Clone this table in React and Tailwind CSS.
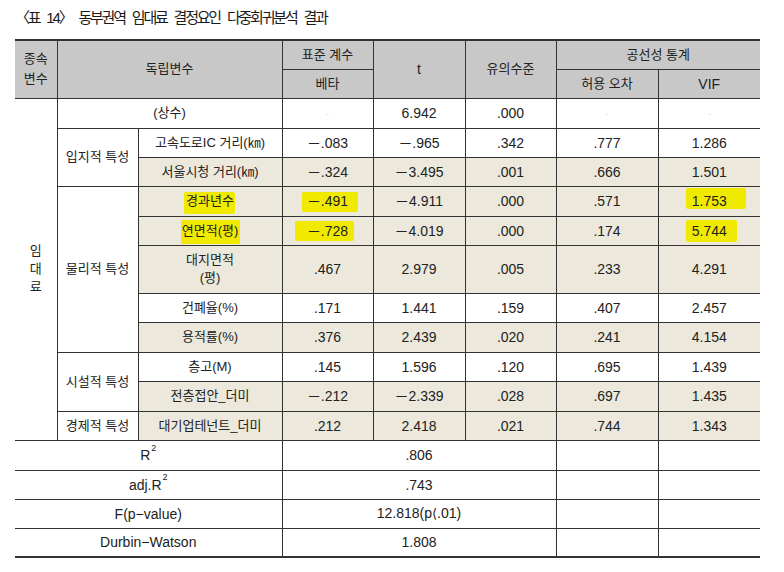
import React from "react";

const C = "border border-[#333] text-center align-middle p-0";
const BG = "bg-[#ece9dc]";
const HD = "bg-[#c8c8c8]";
const N = "text-[14px]";

function HL({ children, box }) {
  return (
    <span className="relative inline-block leading-[16px]">
      <span className={"absolute rounded-[2px] bg-[#f0ea00] " + box} />
      <span className="relative">{children}</span>
    </span>
  );
}

const Faint = () => <span className="text-[#d0d0d0] text-[8px]">-</span>;

function Nums({ beta, t, sig, tol, vif, bg }) {
  const b = bg ? BG : "";
  return (
    <>
      <td className={`${C} ${N} ${b}`}>{beta}</td>
      <td className={`${C} ${N} ${b}`}>{t}</td>
      <td className={`${C} ${N} ${b}`}>{sig}</td>
      <td className={`${C} ${N} ${b}`}>{tol}</td>
      <td className={`${C} ${N} ${b} border-r-0`}>{vif}</td>
    </>
  );
}

const Sup = () => <sup className="text-[9px] align-[5px] ml-[1px]">2</sup>;

export default function App() {
  return (
    <div className="w-[784px] h-[572px] bg-white pl-[15px] pt-[8px] text-[#222] font-['Liberation_Sans','Noto_Sans_CJK_KR',sans-serif]">
      <div className="h-[20px] text-[15px] leading-[20px] tracking-[-2.2px] [word-spacing:5px] text-[#1a1a1a]">
        〈표 14〉 동부권역 임대료 결정요인 다중회귀분석 결과
      </div>
      <table className="mt-[11px] w-[745px] table-fixed border-collapse text-[13px] leading-[16px]">
        <colgroup>
          <col className="w-[42px]" />
          <col className="w-[81px]" />
          <col className="w-[144px]" />
          <col className="w-[91px]" />
          <col className="w-[92px]" />
          <col className="w-[91px]" />
          <col className="w-[102px]" />
          <col className="w-[102px]" />
        </colgroup>
        <tbody>
          <tr className="h-[29px]">
            <td rowSpan={2} className={`${C} ${HD} border-l-0 border-t-2 leading-[20px]`}>
              종속
              <br />
              변수
            </td>
            <td rowSpan={2} colSpan={2} className={`${C} ${HD} border-t-2`}>독립변수</td>
            <td className={`${C} ${HD} border-t-2`}>표준 계수</td>
            <td rowSpan={2} className={`${C} ${HD} ${N} border-t-2`}>t</td>
            <td rowSpan={2} className={`${C} ${HD} border-t-2`}>유의수준</td>
            <td colSpan={2} className={`${C} ${HD} border-t-2 border-r-0`}>공선성 통계</td>
          </tr>
          <tr className="h-[29px]">
            <td className={`${C} ${HD}`}>베타</td>
            <td className={`${C} ${HD}`}>허용 오차</td>
            <td className={`${C} ${HD} ${N} border-r-0`}>VIF</td>
          </tr>
          <tr className="h-[30px]">
            <td rowSpan={11} className={`${C} border-l-0 leading-[18px]`}>
              임
              <br />
              대
              <br />
              료
            </td>
            <td colSpan={2} className={C}>(상수)</td>
            <td className={C}><Faint /></td>
            <td className={`${C} ${N}`}>6.942</td>
            <td className={`${C} ${N}`}>.000</td>
            <td className={C}><Faint /></td>
            <td className={`${C} border-r-0`}><Faint /></td>
          </tr>
          <tr className="h-[29px]">
            <td rowSpan={2} className={C}>입지적 특성</td>
            <td className={C}>고속도로IC 거리(㎞)</td>
            <Nums beta="－.083" t="－.965" sig=".342" tol=".777" vif="1.286" />
          </tr>
          <tr className="h-[29px]">
            <td className={`${C} ${BG}`}>서울시청 거리(㎞)</td>
            <Nums beta="－.324" t="－3.495" sig=".001" tol=".666" vif="1.501" bg />
          </tr>
          <tr className="h-[30px]">
            <td rowSpan={5} className={C}>물리적 특성</td>
            <td className={`${C} ${BG}`}>
              <HL box="-left-[2px] -right-[1px] -top-[1px] -bottom-[5px]">경과년수</HL>
            </td>
            <td className={`${C} ${N} ${BG}`}>
              <HL box="-left-[5px] -right-[10px] -top-[1px] -bottom-[3px]">－.491</HL>
            </td>
            <td className={`${C} ${N} ${BG}`}>－4.911</td>
            <td className={`${C} ${N} ${BG}`}>.000</td>
            <td className={`${C} ${N} ${BG}`}>.571</td>
            <td className={`${C} ${N} ${BG} border-r-0`}>
              <HL box="-left-[6px] -right-[19px] -top-[5px] bottom-0">1.753</HL>
            </td>
          </tr>
          <tr className="h-[29px]">
            <td className={`${C} ${BG}`}>
              <HL box="-left-[1px] -right-[2px] -top-[3px] -bottom-[5px]">연면적(평)</HL>
            </td>
            <td className={`${C} ${N} ${BG}`}>
              <HL box="-left-[12px] -right-[6px] -top-[2px] -bottom-[2px]">－.728</HL>
            </td>
            <td className={`${C} ${N} ${BG}`}>－4.019</td>
            <td className={`${C} ${N} ${BG}`}>.000</td>
            <td className={`${C} ${N} ${BG}`}>.174</td>
            <td className={`${C} ${N} ${BG} border-r-0`}>
              <HL box="-left-[6px] -right-[10px] -top-[3px] -bottom-[3px]">5.744</HL>
            </td>
          </tr>
          <tr className="h-[48px]">
            <td className={`${C} ${BG} leading-[18px]`}>
              대지면적
              <br />
              (평)
            </td>
            <Nums beta=".467" t="2.979" sig=".005" tol=".233" vif="4.291" bg />
          </tr>
          <tr className="h-[29px]">
            <td className={C}>건폐율(%)</td>
            <Nums beta=".171" t="1.441" sig=".159" tol=".407" vif="2.457" />
          </tr>
          <tr className="h-[30px]">
            <td className={`${C} ${BG}`}>용적률(%)</td>
            <Nums beta=".376" t="2.439" sig=".020" tol=".241" vif="4.154" bg />
          </tr>
          <tr className="h-[29px]">
            <td rowSpan={2} className={C}>시설적 특성</td>
            <td className={C}>층고(M)</td>
            <Nums beta=".145" t="1.596" sig=".120" tol=".695" vif="1.439" />
          </tr>
          <tr className="h-[30px]">
            <td className={`${C} ${BG}`}>전층접안_더미</td>
            <Nums beta="－.212" t="－2.339" sig=".028" tol=".697" vif="1.435" bg />
          </tr>
          <tr className="h-[29px]">
            <td className={C}>경제적 특성</td>
            <td className={`${C} ${BG}`}>대기업테넌트_더미</td>
            <Nums beta=".212" t="2.418" sig=".021" tol=".744" vif="1.343" bg />
          </tr>
          <tr className="h-[30px]">
            <td colSpan={3} className={`${C} ${N} border-l-0`}>
              R<Sup />
            </td>
            <td colSpan={3} className={`${C} ${N}`}>.806</td>
            <td className={C}></td>
            <td className={`${C} border-r-0`}></td>
          </tr>
          <tr className="h-[29px]">
            <td colSpan={3} className={`${C} ${N} border-l-0`}>
              adj.R<Sup />
            </td>
            <td colSpan={3} className={`${C} ${N}`}>.743</td>
            <td className={C}></td>
            <td className={`${C} border-r-0`}></td>
          </tr>
          <tr className="h-[29px]">
            <td colSpan={3} className={`${C} ${N} border-l-0`}>F(p−value)</td>
            <td colSpan={3} className={`${C} ${N}`}>
              12.818(p<span className="font-['DejaVu_Sans',sans-serif] text-[13px]">⟨</span>.01)
            </td>
            <td className={C}></td>
            <td className={`${C} border-r-0`}></td>
          </tr>
          <tr className="h-[29px]">
            <td colSpan={3} className={`${C} ${N} border-l-0 border-b-2`}>Durbin−Watson</td>
            <td colSpan={3} className={`${C} ${N} border-b-2`}>1.808</td>
            <td className={`${C} border-b-2`}></td>
            <td className={`${C} border-r-0 border-b-2`}></td>
          </tr>
        </tbody>
      </table>
    </div>
  );
}
